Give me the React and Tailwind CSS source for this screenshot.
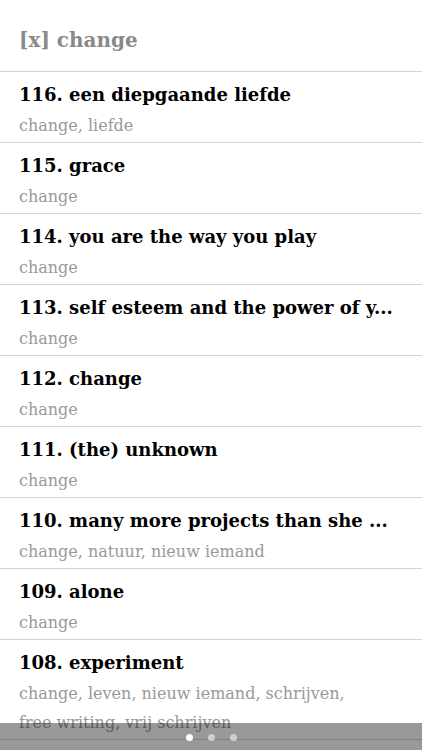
import React from "react";

const items = [
  ["116. een diepgaande liefde", ["change, liefde"]],
  ["115. grace", ["change"]],
  ["114. you are the way you play", ["change"]],
  ["113. self esteem and the power of y...", ["change"]],
  ["112. change", ["change"]],
  ["111. (the) unknown", ["change"]],
  ["110. many more projects than she ...", ["change, natuur, nieuw iemand"]],
  ["109. alone", ["change"]],
  ["108. experiment", ["change, leven, nieuw iemand, schrijven,", "free writing, vrij schrijven"]],
];

export default function App() {
  return (
    <div className="relative bg-white min-h-[750px]" style={{ fontFamily: '"DejaVu Serif", Georgia, serif' }}>
      <div className="h-[71px] flex items-center px-[19px] pt-[9px]">
        <span className="text-[20px] font-bold text-[#8a8a8a]">[x] change</span>
      </div>
      {items.map(([t, s], i) => (
        <div
          key={i}
          className={`border-t border-[#d4d4d4] px-[19px] pt-[11px] ${i === items.length - 1 ? "border-b pb-[2px]" : "pb-[2px]"}`}
        >
          <div className="text-[18px] font-bold text-black leading-[24px] whitespace-nowrap">{t}</div>
          <div className="text-[16px] text-[#999999] leading-[29px] pt-[4px]">
            {s.map((l, j) => (
              <div key={j}>{l}</div>
            ))}
          </div>
        </div>
      ))}
      <div className="fixed left-0 right-0 bottom-0 h-[27px] bg-[rgba(0,0,0,0.4)] flex items-center justify-center gap-[15px] pt-[2px]">
        <span className="w-[7px] h-[7px] rounded-full bg-white" />
        <span className="w-[7px] h-[7px] rounded-full bg-[#cfcfcf]" />
        <span className="w-[7px] h-[7px] rounded-full bg-[#cfcfcf]" />
      </div>
    </div>
  );
}
